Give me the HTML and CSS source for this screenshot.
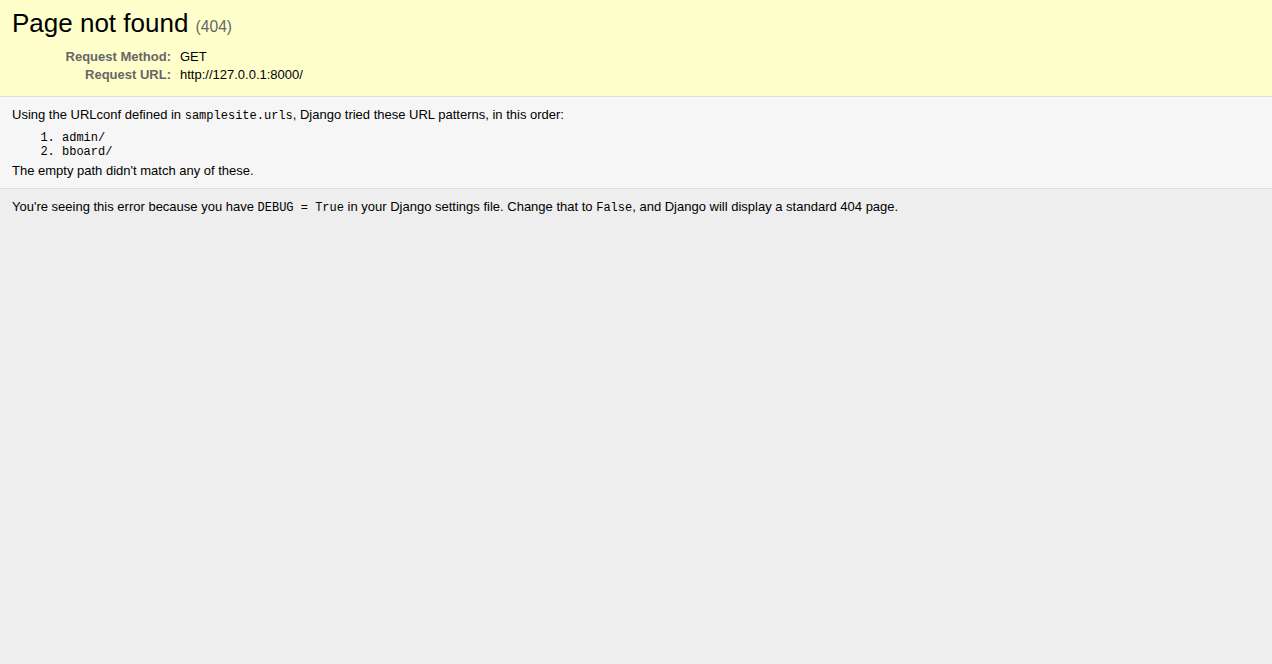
FILE: index.html
```html
<!DOCTYPE html>
<html lang="en">
<head>
  <meta charset="UTF-8">
  <meta name="viewport" content="width=device-width, initial-scale=1.0">
  <title>Page not found at /</title>
  <link rel="stylesheet" href="styles.css">
</head>
<body>

  <!-- Summary -->
  <div class="summary">
    <h1>Page not found <span>(404)</span></h1>
    <table class="meta">
      <tr>
        <th>Request Method:</th>
        <td>GET</td>
      </tr>
      <tr>
        <th>Request URL:</th>
        <td>http://127.0.0.1:8000/</td>
      </tr>
    </table>
  </div>

  <!-- URL patterns -->
  <div class="info">
    <p>Using the URLconf defined in <code>samplesite.urls</code>, Django tried these URL patterns, in this order:</p>
    <ol>
      <li>admin/</li>
      <li>bboard/</li>
    </ol>
    <p>The empty path didn't match any of these.</p>
  </div>

  <!-- Explanation -->
  <div class="explanation">
    <p>You're seeing this error because you have <code>DEBUG = True</code> in your Django settings file. Change that to <code>False</code>, and Django will display a standard 404 page.</p>
  </div>

</body>
</html>
```

FILE: styles.css
```css
:root {
  --summary-color: #ffffcc;
  --info-color: #f6f6f6;
  --body-color: #eeeeee;
  --border-color: #dddddd;
  --muted-color: #666666;
}

html, body {
  margin: 0;
  padding: 0;
}

body {
  font-family: 'Liberation Sans', Arial, sans-serif;
  font-size: 13px;
  background-color: var(--body-color);
  color: #000;
  min-height: 100vh;
}

code,
.info ol li {
  font-family: 'Liberation Mono', 'Courier New', monospace;
  font-size: 12px;
}

.summary,
.info,
.explanation {
  padding: 10px 12px;
  border-bottom: 1px solid var(--border-color);
}

.summary {
  background-color: var(--summary-color);
  padding-bottom: 12px;
}

.info {
  background-color: var(--info-color);
  padding-bottom: 9px;
}

.explanation {
  border-bottom: none;
}

h1 {
  margin: 0 0 8px;
  font-size: 26px;
  font-weight: normal;
  line-height: 26px;
}

h1 span {
  font-size: 60%;
  color: var(--muted-color);
}

/* Request meta table */
.meta {
  border: none;
  border-collapse: collapse;
  width: 100%;
}

.meta th,
.meta td {
  vertical-align: top;
  padding: 2px 3px;
  line-height: 14px;
}

.meta th {
  width: 156px;
  text-align: right;
  color: var(--muted-color);
  padding-right: 6px;
}

.info p,
.explanation p {
  margin: 0;
  line-height: 16px;
}

.info ol {
  margin: 7px 0 4px;
  padding-left: 50px;
}

.info ol li {
  line-height: 14px;
}
```
